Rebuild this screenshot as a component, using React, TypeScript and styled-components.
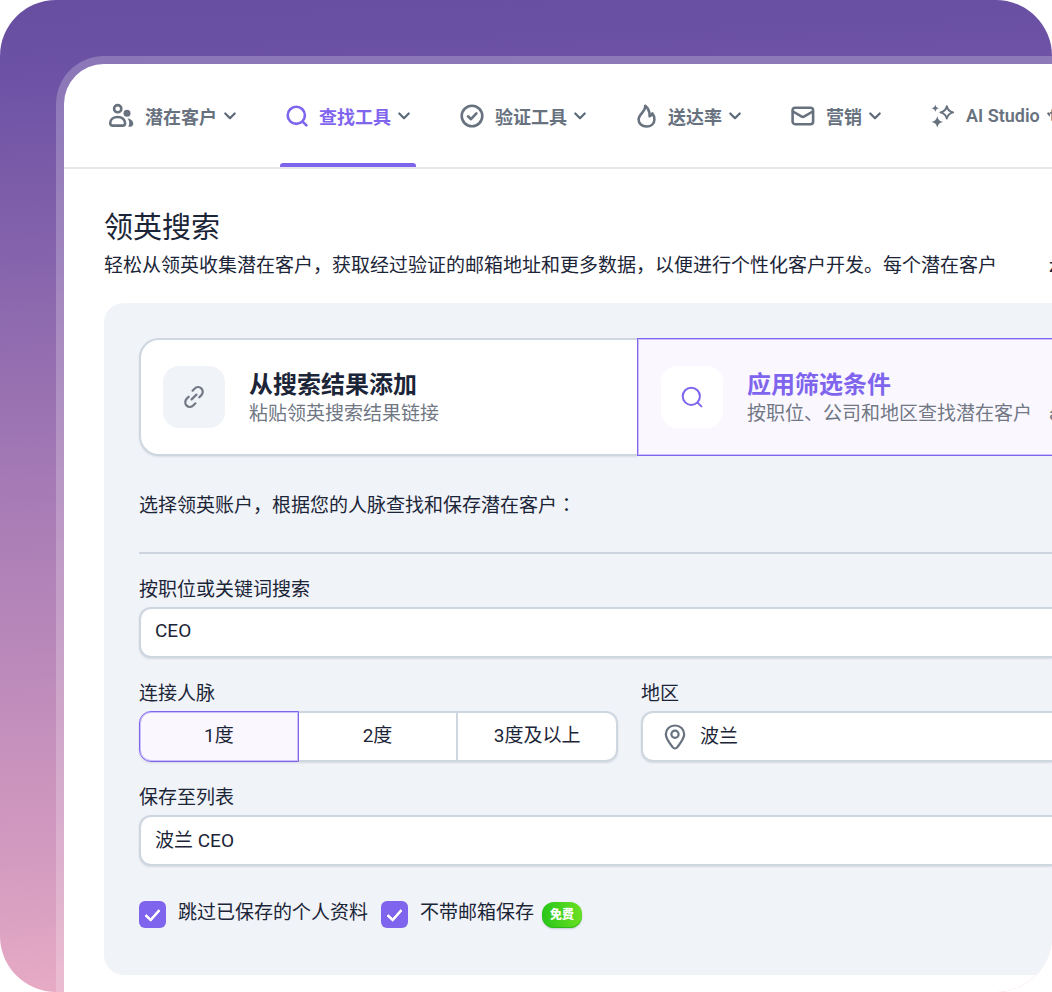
import React from "react";
import styled, { createGlobalStyle } from "styled-components";

const GlobalStyle = createGlobalStyle`
  *, *::before, *::after { box-sizing: border-box; }
  body { margin: 0; background: #fff; }
  body, button, input { font-family: Roboto, "Noto Sans CJK SC", sans-serif; }
  h1, h2, p { margin: 0; }
`;

const Frame = styled.div`
  min-height: 100vh;
  padding: 56px 0 0 56px;
  border-radius: 56px;
  overflow: hidden;
  display: flex;
  color: #1b2537;
  background: linear-gradient(178deg, #674ea1 0%, #6d52a5 8%, #a57ab5 47%, #d49bc0 84%, #ecafc6 100%);
`;

const Rim = styled.div`
  flex: 1;
  min-width: 0;
  display: flex;
  padding: 8px 0 0 8px;
  border-radius: 48px 0 0 0;
  background: rgba(255, 255, 255, 0.22);
`;

const Window = styled.main`
  flex: 1;
  min-width: 0;
  overflow: hidden;
  border-radius: 40px 0 0 0;
  background: #fff;
`;

const Nav = styled.nav`
  height: 105px;
  padding-left: 38px;
  display: flex;
  gap: 38px;
  white-space: nowrap;
  overflow: hidden;
  border-bottom: 2px solid #e8e8ea;
`;

const NavLink = styled.a<{ $active?: boolean }>`
  flex: none;
  display: flex;
  flex-direction: column;
  font-size: 18px;
  font-weight: 600;
  text-decoration: none;
  color: ${(p) => (p.$active ? "#7f65ee" : "#68727f")};
  &::after {
    content: "";
    height: 4px;
    border-radius: 3px 3px 0 0;
    background: ${(p) => (p.$active ? "#7f65ee" : "transparent")};
  }
`;

const NavRow = styled.span`
  flex: 1;
  padding: 4px 6px 0;
  display: flex;
  align-items: center;
  svg { flex: none; }
`;

const NavText = styled.span`
  margin: 0 7px 0 11px;
`;

const Chevron = styled.svg`
  height: 8px;
  color: #5d6a79;
`;

const Content = styled.div`
  padding: 39px 0 17px 40px;
`;

const Title = styled.h1`
  font-size: 29px;
  line-height: 40px;
  font-weight: 400;
`;

const Lead = styled.p`
  display: flex;
  gap: 52px;
  margin-bottom: 20px;
  font-size: 19px;
  line-height: 35px;
  white-space: nowrap;
  overflow: hidden;
`;

const Panel = styled.form`
  padding: 35px 0 45px 35px;
  border-radius: 20px 0 0 20px;
  background: #f0f3f8;
`;

const Modes = styled.div`
  display: flex;
  height: 118px;
`;

const Mode = styled.button<{ $active?: boolean }>`
  flex: none;
  width: ${(p) => (p.$active ? "499px" : "498px")};
  padding: ${(p) => (p.$active ? "0 23px" : "0 22px")};
  display: flex;
  align-items: center;
  gap: 24px;
  text-align: left;
  white-space: nowrap;
  border: solid ${(p) => (p.$active ? "#7f65ee" : "#ced6e0")};
  border-width: ${(p) => (p.$active ? "1px" : "2px 0 2px 2px")};
  border-radius: ${(p) => (p.$active ? "0" : "20px 0 0 20px")};
  background: ${(p) => (p.$active ? "#faf7ff" : "#fff")};
  box-shadow: ${(p) => (p.$active ? "inset 0 0 0 1px #cbbffa" : "0 1px 2px rgba(27, 37, 55, 0.1)")};
`;

const Tile = styled.span<{ $white?: boolean }>`
  flex: none;
  width: 62px;
  height: 62px;
  display: grid;
  place-items: center;
  border-radius: 16px;
  background: ${(p) => (p.$white ? "#fff" : "#f0f3f8")};
  color: ${(p) => (p.$white ? "#7f65ee" : "#727985")};
`;

const ModeText = styled.span`
  display: grid;
  padding-top: 4px;
`;

const ModeTitle = styled.strong<{ $active?: boolean }>`
  font-size: 24px;
  line-height: 30px;
  font-weight: 700;
  color: ${(p) => (p.$active ? "#7f65ee" : "#1b2537")};
`;

const ModeHint = styled.span`
  display: flex;
  gap: 17px;
  font-size: 19px;
  line-height: 28px;
  color: #717884;
`;

const Prompt = styled.p`
  padding: 32px 0 30px;
  font-size: 19px;
  line-height: 32px;
  border-bottom: 2px solid #cfd5df;
`;

const Colon = styled.span`
  font-family: "Noto Sans CJK TC", sans-serif;
`;

const Fields = styled.div`
  padding-top: 20px;
  display: grid;
  gap: 20px;
`;

const Split = styled.div`
  display: grid;
  grid-template-columns: minmax(0, 479px) minmax(0, 1fr);
  gap: 23px;
`;

const Field = styled.div`
  min-width: 0;
`;

const Label = styled.label`
  display: block;
  height: 33px;
  font-size: 19px;
  line-height: 32px;
`;

const Box = styled.div`
  height: 51px;
  display: flex;
  align-items: center;
  border: 2px solid #ced6e0;
  border-right: 0;
  border-radius: 12px 0 0 12px;
  background: #fff;
  box-shadow: 0 1px 2px rgba(27, 37, 55, 0.12);
`;

const Pin = styled.svg`
  flex: none;
  margin-left: 21px;
  color: #68727f;
`;

const Input = styled.input`
  flex: 1;
  min-width: 0;
  height: 42px;
  margin-bottom: 5px;
  padding: 0 14px;
  border: 0;
  outline: 0;
  background: none;
  font-size: 19px;
  color: #1b2537;
`;

const Degrees = styled.div`
  height: 51px;
  display: grid;
  grid-template-columns: repeat(3, 1fr);
  border-radius: 12px;
  box-shadow: 0 1px 2px rgba(27, 37, 55, 0.12);
`;

const Degree = styled.button<{ $active?: boolean }>`
  padding: 0 0 6px;
  font-size: 19px;
  color: #1b2537;
  border: solid ${(p) => (p.$active ? "#7f65ee" : "#ced6e0")};
  border-width: ${(p) => (p.$active ? "1px" : "2px 2px 2px 0")};
  background: ${(p) => (p.$active ? "#faf7ff" : "#fff")};
  box-shadow: ${(p) => (p.$active ? "inset 0 0 0 1px #cbbffa" : "none")};
  &:first-child { border-radius: 12px 0 0 12px; }
  &:last-child { border-radius: 0 12px 12px 0; }
`;

const Options = styled.div`
  padding-top: 33px;
  display: flex;
  align-items: center;
  gap: 13px;
`;

const Option = styled.label`
  display: flex;
  align-items: center;
  gap: 12px;
  font-size: 19px;
  line-height: 27px;
`;

const OptionText = styled.span`
  margin-bottom: 4px;
`;

const Check = styled.input`
  appearance: none;
  width: 27px;
  height: 27px;
  margin: 0;
  border-radius: 6px;
  background: #7f65ee;
  display: grid;
  place-items: center;
  &:checked::before {
    content: "";
    width: 15px;
    height: 9px;
    margin-bottom: 3px;
    border: solid #fff;
    border-width: 0 0 3px 3px;
    border-radius: 1px;
    transform: rotate(-48deg);
  }
`;

const Badge = styled.span`
  height: 26px;
  margin-left: -5px;
  padding: 0 8px;
  border-radius: 12px;
  font-size: 12px;
  line-height: 26px;
  font-weight: 900;
  color: #fff;
  background: linear-gradient(90deg, #27c619, #6be022);
  box-shadow: inset 0 -1px 1px #2db51d, 0 1px 2px rgba(27, 37, 55, 0.2);
`;

const stroke = { fill: "none", stroke: "currentColor", strokeLinecap: "round", strokeLinejoin: "round" } as const;

const PeopleIcon = () => (
  <svg width="26" height="26" viewBox="0 0 26 26" {...stroke} strokeWidth="2.6">
    <circle cx="9.7" cy="5.7" r="3.6" />
    <path d="M2.2 20.2C2.2 16.5 5.3 14 9.7 14s7.4 2.5 7.4 6.2c0 1.500-1 2.400-2.400 2.400H4.600c-1.400 0-2.400-.9-2.400-2.400Z" />
    <circle cx="19" cy="10.3" r="3.500" fill="currentColor" stroke="none" />
    <path d="M20.300 15.400c3.200.6 5 2.700 5 5.200 0 1.900-1.100 3.200-3.100 3.200h-2c.8-1.400 1-2.500 1-3.700 0-1.700-.5-3.200-1.700-4.500Z" fill="currentColor" stroke="none" />
  </svg>
);

const SearchIcon = ({ size, width }: { size: number; width: number }) => (
  <svg width={size} height={size} viewBox="0 0 22 22" {...stroke} strokeWidth={width}>
    <circle cx="10.300" cy="10.300" r="8.600" />
    <path d="m16.600 16.600 3.800 3.800" />
  </svg>
);

const VerifyIcon = () => (
  <svg width="24" height="24" viewBox="0 0 24 24" {...stroke} strokeWidth="2.600">
    <circle cx="12" cy="12" r="10.300" />
    <path d="m8 12.300 3 2.900 5.400-5.800" />
  </svg>
);

const FlameIcon = () => (
  <svg width="21" height="24" viewBox="-1 0 21 24" {...stroke} strokeWidth="2.600">
    <path d="M8.200 1.800c.3 2.800-1 4.700-3.100 7.100-2.100 2.400-3.500 4-3.500 6.700 0 4 3.300 6.900 7.900 6.900s7.900-2.900 7.900-7.100c0-2.400-.7-4.300-2.100-6-.6 1.400-1.400 2.300-2.700 2.800.2-4.300-.9-7.600-4.400-10.400Z" />
  </svg>
);

const MailIcon = () => (
  <svg width="24" height="20" viewBox="0 0 24 20" {...stroke} strokeWidth="2.600">
    <rect x="1.600" y="1.800" width="20.500" height="16.400" rx="2.600" />
    <path d="m2 5.500 8.300 4.900c1 .6 2.100.6 3.100 0L21.800 5.500" />
  </svg>
);

const SparkIcon = () => (
  <svg width="24" height="24" viewBox="0 0 24 24" {...stroke} strokeWidth="2">
    <path d="M15.800 2.200c.8 3.700 2.200 5.100 6.300 6.200-4.100 1.100-5.500 2.500-6.300 6.200-.8-3.700-2.200-5.100-6.300-6.200 4.100-1.100 5.500-2.500 6.300-6.200Z" />
    <path d="M4.300.4c.5 2.500 1.200 3.200 3.700 3.800-2.500.6-3.200 1.300-3.700 3.800C3.800 5.500 3.100 4.800.6 4.200 3.100 3.600 3.800 2.900 4.300.4ZM6.300 12c.9 3.800 2.100 5 5.800 5.900-3.700.9-4.900 2.100-5.800 5.900-.9-3.800-2.100-5-5.800-5.900 3.700-.9 4.900-2.100 5.800-5.900Z" fill="currentColor" stroke="none" />
  </svg>
);

const LinkIcon = () => (
  <svg width="22" height="22" viewBox="0 0 22 22" {...stroke} strokeWidth="2.200">
    <path d="m9.600 4.700 1.900-1.900c2-2 4.900-2.200 6.800-.4 2 1.900 1.900 5-.1 7l-1.900 1.900M12.400 17.300l-1.900 1.900c-2 2-4.900 2.200-6.800.4-2-1.900-1.900-5 .1-7l1.900-1.900M8.600 13.400l4.800-4.800" />
  </svg>
);

const tools = [
  { name: "潜在客户", icon: <PeopleIcon /> },
  { name: "查找工具", icon: <SearchIcon size={22} width={2.6} />, active: true },
  { name: "验证工具", icon: <VerifyIcon /> },
  { name: "送达率", icon: <FlameIcon /> },
  { name: "营销", icon: <MailIcon /> },
  { name: "AI Studio", icon: <SparkIcon />, tail: "t" },
];

export default function App() {
  return (
    <Frame>
      <GlobalStyle />
      <Rim>
        <Window>
          <Nav>
            {tools.map((t) => (
              <NavLink key={t.name} href="#" $active={t.active}>
                <NavRow>
                  {t.icon}
                  <NavText>{t.name}</NavText>
                  <Chevron width={t.tail ? 3 : 12} viewBox={t.tail ? "0 0 3 8" : "0 0 12 8"} {...stroke} strokeWidth="2.200">
                    <path d="m1.300 1.500 4.700 4.700 4.700-4.700" />
                  </Chevron>
                  {t.tail}
                </NavRow>
              </NavLink>
            ))}
          </Nav>
          <Content>
            <Title>领英搜索</Title>
            <Lead>
              <span>轻松从领英收集潜在客户，获取经过验证的邮箱地址和更多数据，以便进行个性化客户开发。每个潜在客户</span>
              <span>z</span>
            </Lead>
            <Panel>
              <Modes>
                <Mode type="button">
                  <Tile><LinkIcon /></Tile>
                  <ModeText>
                    <ModeTitle>从搜索结果添加</ModeTitle>
                    <ModeHint>粘贴领英搜索结果链接</ModeHint>
                  </ModeText>
                </Mode>
                <Mode type="button" $active>
                  <Tile $white><SearchIcon size={22} width={2} /></Tile>
                  <ModeText>
                    <ModeTitle $active>应用筛选条件</ModeTitle>
                    <ModeHint>
                      <span>按职位、公司和地区查找潜在客户</span>
                      <span>a</span>
                    </ModeHint>
                  </ModeText>
                </Mode>
              </Modes>
              <Prompt>选择领英账户，根据您的人脉查找和保存潜在客户<Colon>：</Colon></Prompt>
              <Fields>
                <Field>
                  <Label htmlFor="keyword">按职位或关键词搜索</Label>
                  <Box><Input id="keyword" defaultValue="CEO" /></Box>
                </Field>
                <Split>
                  <Field>
                    <Label as="span" id="degree">连接人脉</Label>
                    <Degrees role="group" aria-labelledby="degree">
                      <Degree type="button" $active>1度</Degree>
                      <Degree type="button">2度</Degree>
                      <Degree type="button">3度及以上</Degree>
                    </Degrees>
                  </Field>
                  <Field>
                    <Label htmlFor="region">地区</Label>
                    <Box>
                      <Pin width="22" height="26" viewBox="0 0 22 26" {...stroke} strokeWidth="2.200">
                        <path d="M11 24.500c-1 0-1.700-.5-2.400-1.400C5 18.500 1.800 14.600 1.800 10.300 1.800 5.300 5.800 1.500 11 1.500s9.200 3.800 9.200 8.800c0 4.300-3.200 8.200-6.800 12.800-.7.900-1.400 1.400-2.400 1.400Z" />
                        <circle cx="11" cy="10.300" r="3.600" />
                      </Pin>
                      <Input id="region" defaultValue="波兰" />
                    </Box>
                  </Field>
                </Split>
                <Field>
                  <Label htmlFor="list">保存至列表</Label>
                  <Box><Input id="list" defaultValue="波兰 CEO" /></Box>
                </Field>
              </Fields>
              <Options>
                <Option>
                  <Check type="checkbox" defaultChecked />
                  <OptionText>跳过已保存的个人资料</OptionText>
                </Option>
                <Option>
                  <Check type="checkbox" defaultChecked />
                  <OptionText>不带邮箱保存</OptionText>
                </Option>
                <Badge>免费</Badge>
              </Options>
            </Panel>
          </Content>
        </Window>
      </Rim>
    </Frame>
  );
}
